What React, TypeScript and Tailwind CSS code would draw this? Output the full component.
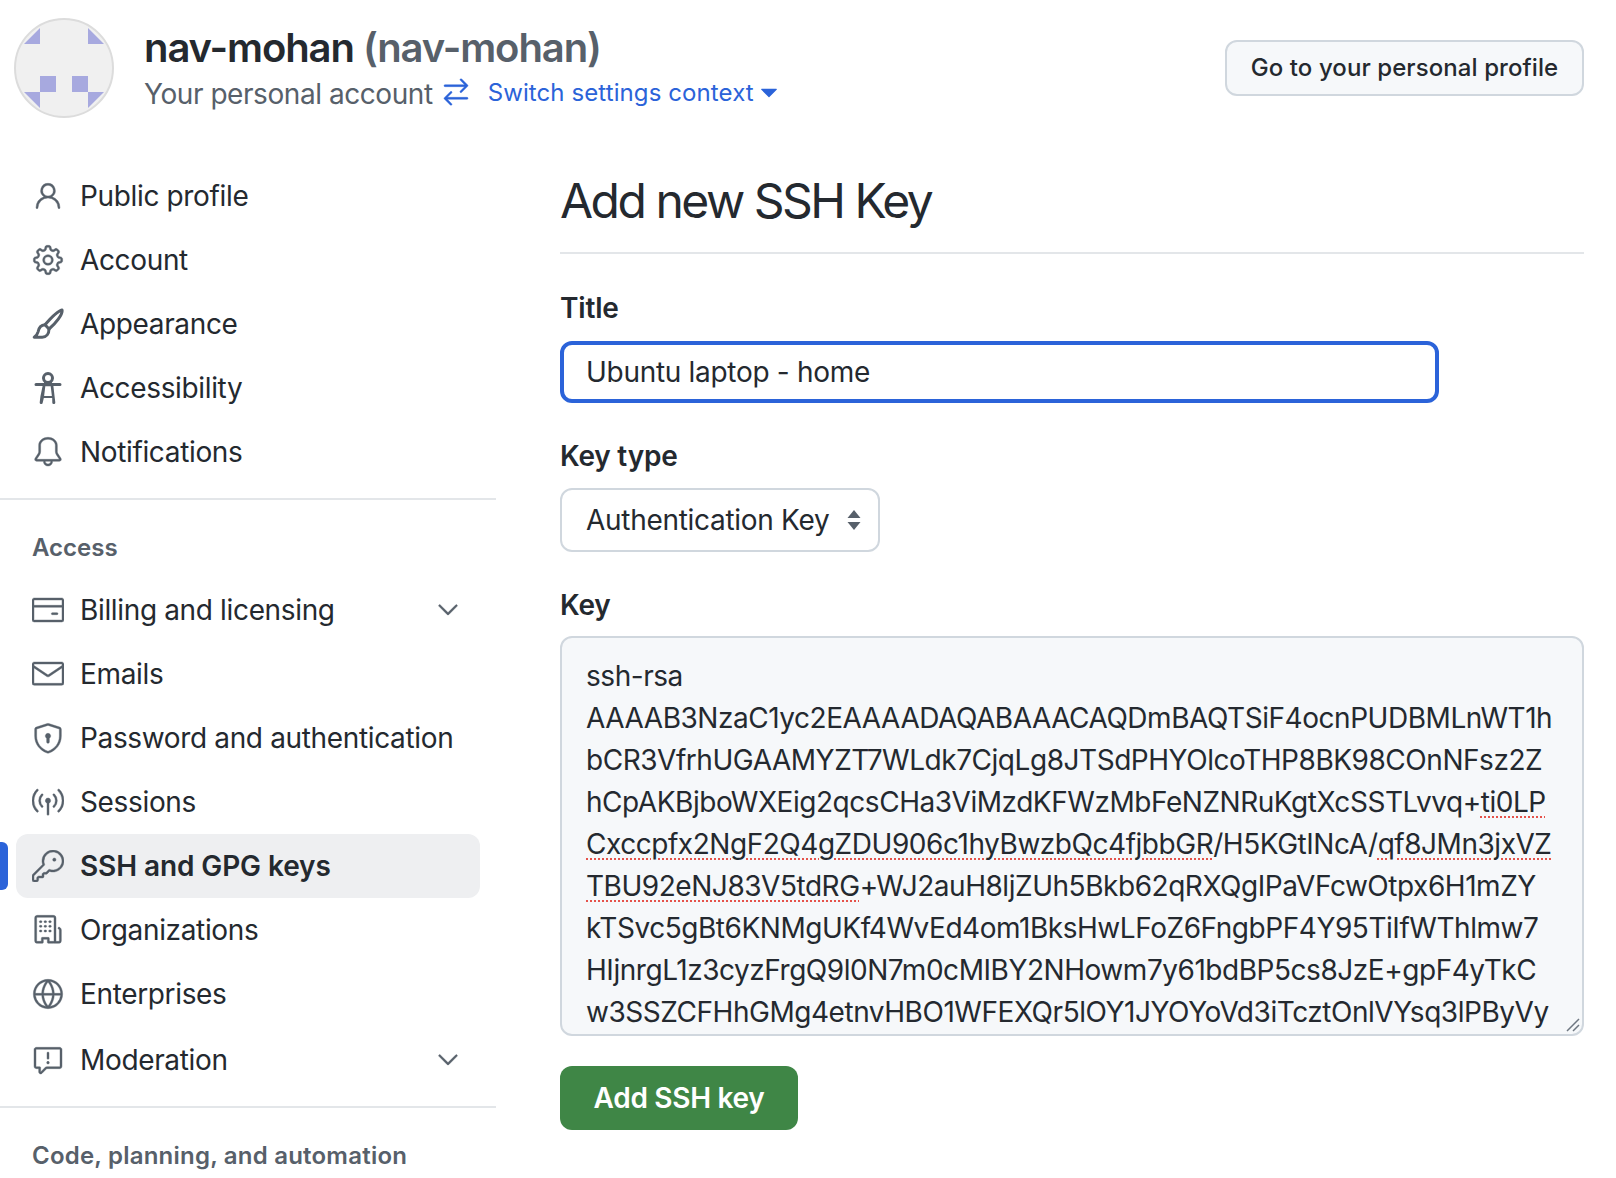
import React from "react";
import {
  GoPerson, GoGear, GoBell, GoCreditCard, GoMail, GoShieldLock,
  GoBroadcast, GoKey, GoOrganization, GoGlobe, GoReport, GoChevronDown, GoArrowSwitch, GoTriangleDown,
} from "react-icons/go";

function GoPaintbrush({ size, className }: { size?: number; className?: string }) {
  return (
    <svg width={size} height={size} viewBox="0 0 16 16" fill="none" stroke="currentColor" strokeLinejoin="round" className={className} style={{ strokeWidth: 1.5 }}>
      <path d="M15 1c-2 .4-6 4.5-8.5 7.4l2 2.1C11.6 8 15.6 3 15 1Z" />
      <path d="M6.5 8.4C4.6 8.5 3.4 10 3 12c-.3 1.3-1 2-1.9 2.6h4c2.1 0 3.4-1.700 3.400-4.100" />
    </svg>
  );
}

function GoAccessibility({ size, className }: { size?: number; className?: string }) {
  return (
    <svg width={size} height={size} viewBox="0 0 16 16" fill="currentColor" className={className}>
      <path fillRule="evenodd" d="M9.923 5.302c.063.063.122.129.178.198H14A.75.75 0 0 1 14 7h-3.3l.578 5.163.362 2.997a.75.75 0 0 1-1.49.18L10.094 13H5.906l-.556 2.34a.75.75 0 1 1-1.49-.18l.362-2.997L5.3 7H2a.75.75 0 0 1 0-1.5h3.9a2.54 2.54 0 0 1 .176-.198 3 3 0 1 1 3.847 0ZM9.2 7.073h-2.4c-.05 0-.1.01-.148.026L6.06 12h3.88l-.593-4.9a.44.44 0 0 0-.147-.027ZM8 4.5a1.5 1.5 0 1 0 0-3 1.5 1.5 0 0 0 0 3Z" />
    </svg>
  );
}

function NavRow({ icon: Icon, label, chevron, active, extra }: { icon: React.ComponentType<{ size?: number; className?: string }>; label: string; chevron?: boolean; active?: boolean; extra?: string }) {
  return (
    <div className={`relative mx-4 flex h-16 items-center rounded-xl pl-4 pr-4 ${active ? "bg-[#eeeff1]" : ""} ${extra ?? ""}`}>
      {active && <span className="absolute left-[-16px] top-2 h-12 w-2 rounded-r-md bg-[#2b63d9]" />}
      <Icon size={32} className="shrink-0 stroke-[0.3] text-[#57606a]" />
      <span className={`ml-4 flex-1 whitespace-nowrap text-[28px] leading-none text-[#24292f] ${active ? "font-semibold tracking-[-0.1px]" : "tracking-[-0.35px]"}`}>{label}</span>
      {chevron && <GoChevronDown size={32} className="stroke-[0.3] text-[#57606a]" />}
    </div>
  );
}

function Sp({ children }: { children: React.ReactNode }) {
  return <span className="underline decoration-dotted decoration-[#e5534b] decoration-2 underline-offset-4">{children}</span>;
}

const keyLines: React.ReactNode[] = [
  "ssh-rsa",
  "AAAAB3NzaC1yc2EAAAADAQABAAACAQDmBAQTSiF4ocnPUDBMLnWT1h",
  "bCR3VfrhUGAAMYZT7WLdk7CjqLg8JTSdPHYOlcoTHP8BK98COnNFsz2Z",
  <>hCpAKBjboWXEig2qcsCHa3ViMzdKFWzMbFeNZNRuKgtXcSSTLvvq+<Sp>ti0LP</Sp></>,
  <><Sp>Cxccpfx2NgF2Q4gZDU906c1hyBwzbQc4fjbbGR</Sp>/H5KGtINcA/<Sp>qf8JMn3jxVZ</Sp></>,
  <><Sp>TBU92eNJ83V5tdRG</Sp>+WJ2auH8ljZUh5Bkb62qRXQgIPaVFcwOtpx6H1mZY</>,
  "kTSvc5gBt6KNMgUKf4WvEd4om1BksHwLFoZ6FngbPF4Y95TiIfWThlmw7",
  "HIjnrgL1z3cyzFrgQ9l0N7m0cMIBY2NHowm7y61bdBP5cs8JzE+gpF4yTkC",
  "w3SSZCFHhGMg4etnvHBO1WFEXQr5lOY1JYOYoVd3iTcztOnlVYsq3lPByVy",
];

export default function App() {
  return (
    <div className="h-[1178px] w-[1616px] overflow-hidden bg-white font-['Inter','Liberation_Sans',sans-serif] text-[#24292f]">
      <header className="flex h-[134px] items-start pl-[14px] pr-8 pt-[18px]">
        <svg width="100" height="100" viewBox="0 0 100 100" className="shrink-0">
          <circle cx="50" cy="50" r="49" fill="#f0f0f0" stroke="#dcdcdc" strokeWidth="2" />
          <g fill="#a7a9df">
            <polygon points="10,26 26,10 26,26" />
            <polygon points="74,10 90,26 74,26" />
            <rect x="26" y="58" width="16" height="16" />
            <rect x="58" y="58" width="16" height="16" />
            <polygon points="10,74 26,74 26,90" />
            <polygon points="74,74 90,74 74,90" />
          </g>
        </svg>
        <div className="ml-[30px] mt-[6px]">
          <div className="whitespace-nowrap text-[40px] font-semibold leading-[48px] tracking-[-1.08px]">
            nav-mohan <span className="text-[#57606a]">(nav-mohan)</span>
          </div>
          <div className="flex h-[44px] items-center whitespace-nowrap">
            <span className="text-[28px] tracking-[-0.44px] text-[#57606a]">Your personal account</span>
            <GoArrowSwitch size={32} className="mb-[4px] ml-[7px] stroke-[0.3] text-[#2b63d9]" />
            <span className="mb-[2px] ml-4 text-[24px] tracking-[0.1px] text-[#2b63d9]">Switch settings context</span>
            <GoTriangleDown size={30} className="mb-[2px] text-[#2b63d9]" />
          </div>
        </div>
        <button className="ml-auto mt-[22px] flex h-[56px] w-[359px] items-center justify-center rounded-xl border-2 border-[#d0d7de] bg-[#f6f8fa] text-[24px] font-medium tracking-[0.08px]">
          Go to your personal profile
        </button>
      </header>
      <div className="flex">
        <aside className="w-[496px] shrink-0 pt-[30px]">
          <NavRow icon={GoPerson} label="Public profile" />
          <NavRow icon={GoGear} label="Account" />
          <NavRow icon={GoPaintbrush} label="Appearance" />
          <NavRow icon={GoAccessibility} label="Accessibility" />
          <NavRow icon={GoBell} label="Notifications" />
          <div className="mt-[14px] h-[2px] bg-[#e3e6e9]" />
          <div className="ml-8 mt-8 text-[24px] font-semibold leading-[32px] text-[#57606a]">Access</div>
          <div className="mt-[14px]">
            <NavRow icon={GoCreditCard} label="Billing and licensing" chevron />
            <NavRow icon={GoMail} label="Emails" />
            <NavRow icon={GoShieldLock} label="Password and authentication" />
            <NavRow icon={GoBroadcast} label="Sessions" />
            <NavRow icon={GoKey} label="SSH and GPG keys" active />
            <NavRow icon={GoOrganization} label="Organizations" />
            <NavRow icon={GoGlobe} label="Enterprises" />
            <NavRow icon={GoReport} label="Moderation" chevron extra="mt-[2px]" />
          </div>
          <div className="mt-[14px] h-[2px] bg-[#e3e6e9]" />
          <div className="ml-8 mt-8 whitespace-nowrap text-[24px] font-semibold leading-[32px] tracking-[0.22px] text-[#57606a]">Code, planning, and automation</div>
        </aside>
        <main className="ml-[64px] flex-1 pr-8 pt-[38px]">
          <h1 className="border-b-2 border-[#e3e6e9] pb-[22px] text-[48px] font-normal leading-[58px] tracking-[-2.5px]">Add new SSH Key</h1>
          <div className="mt-[36px] text-[28px] font-semibold leading-[36px] tracking-[-0.2px]">Title</div>
          <div className="mt-[15px] flex h-[62px] w-[879px] items-center rounded-xl border-4 border-[#2b63d9] pl-[22px] text-[28px] tracking-[-0.3px]">Ubuntu laptop - home</div>
          <div className="mt-[35px] text-[28px] font-semibold leading-[36px] tracking-[-0.2px]">Key type</div>
          <div className="relative mt-[14px] flex h-[64px] w-[320px] items-center rounded-xl border-2 border-[#d0d7de] pl-[24px] text-[28px] tracking-[-0.3px]">
            Authentication Key
            <svg width="16" height="24" viewBox="0 0 16 24" className="absolute right-[16px] top-[18px]" fill="#57606a">
              <path d="M8 2l6.500 8h-13zM8 22l-6.500-8h13z" />
            </svg>
          </div>
          <div className="mt-[35px] text-[28px] font-semibold leading-[36px] tracking-[-0.2px]">Key</div>
          <div className="relative mt-[13px] h-[400px] overflow-hidden rounded-xl border-2 border-[#d0d7de] bg-[#f6f8fa] pl-[24px] pt-[17px] text-[28px] leading-[42px] tracking-[-0.46px]">
            {keyLines.map((line, i) => (
              <div key={i} className="whitespace-nowrap">{line}</div>
            ))}
            <svg width="16" height="16" viewBox="0 0 16 16" className="absolute bottom-[2px] right-[2px]">
              <path d="M3 15L15 3M9 15L15 9" stroke="#6e7781" strokeWidth="1.500" />
            </svg>
          </div>
          <button className="mt-[30px] flex h-[64px] w-[238px] items-center justify-center rounded-xl bg-[#3f8646] text-[28px] font-semibold tracking-[-0.3px] text-white">Add SSH key</button>
        </main>
      </div>
    </div>
  );
}
